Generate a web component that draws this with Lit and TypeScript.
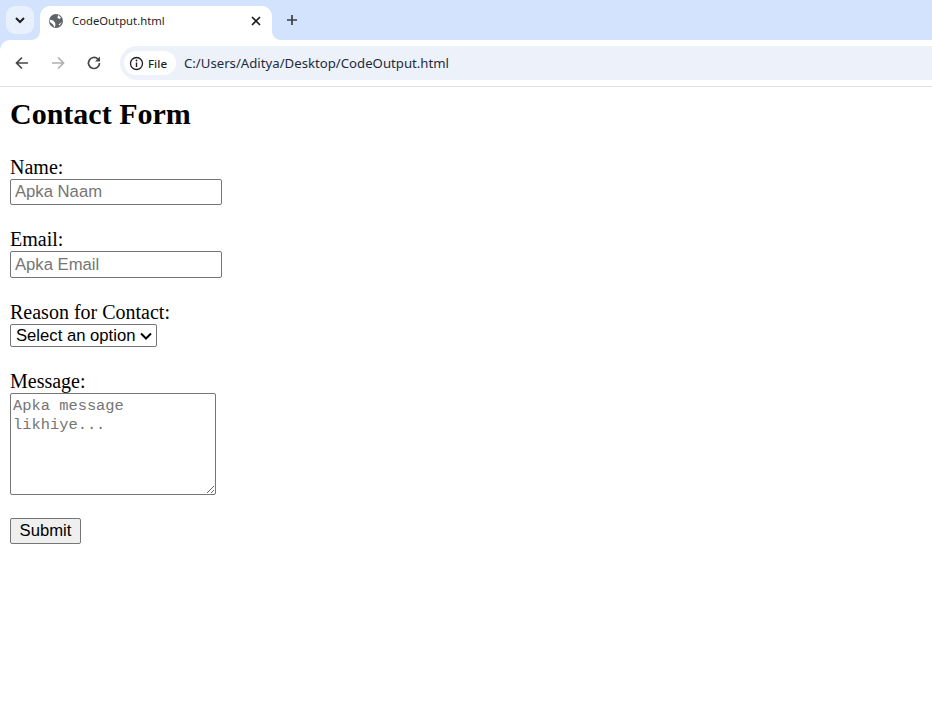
import { LitElement, html, css } from "lit";
import { customElement } from "lit/decorators.js";

@customElement("app-root")
export class AppRoot extends LitElement {
  static styles = css`
    :host { display: block; width: 932px; height: 723px; overflow: hidden; background: #fff; font-family: "Liberation Serif", serif; color: #000; }
    .chrome { background: #d3e3fd; font-family: "Noto Sans", "Open Sans", sans-serif; }
    .strip { height: 40px; display: flex; align-items: flex-start; box-sizing: border-box; padding: 6px 0 0 6px; }
    .tabsearch { width: 28px; height: 28px; border-radius: 9px; background: #e9f0fd; display: flex; align-items: center; justify-content: center; margin-right: 6px; }
    .tab { position: relative; width: 232px; height: 34px; background: #fff; border-radius: 10px 10px 0 0; display: flex; align-items: center; box-sizing: border-box; padding: 0 11px 5px 8px; }
    .tab::before, .tab::after { content: ""; position: absolute; bottom: 0; width: 8px; height: 8px; background: radial-gradient(circle at var(--c) 0, #d3e3fd 7.5px, #fff 8px); }
    .tab::before { left: -8px; --c: 0; }
    .tab::after { right: -8px; --c: 100%; }
    .favicon { margin-right: 8px; flex: none; }
    .title { flex: 1; font-size: 11.3px; color: #1f1f1f; white-space: nowrap; }
    .newtab { margin: 6px 0 0 12px; width: 16px; height: 16px; display: flex; }
    .toolbar { height: 46px; background: #fff; border-radius: 10px 0 0 0; display: flex; align-items: center; box-sizing: border-box; padding: 0 0 0 12px; }
    .nav { width: 20px; height: 20px; margin-right: 16px; display: flex; flex: none; }
    .omni { flex: 1; height: 34px; background: #edf2fa; border-radius: 17px 0 0 17px; display: flex; align-items: center; padding-left: 4px; }
    .chip { height: 24px; width: 52px; box-sizing: border-box; background: #fff; border-radius: 12px; display: flex; align-items: center; padding-left: 5px; gap: 4px; font-size: 11.6px; font-weight: 500; color: #1f1f1f; }
    .url { margin-left: 8px; font-size: 13.2px; color: #1f2a3a; white-space: nowrap; }
    .rule { height: 1px; background: #e0e0e0; }
    main { padding: 0 10px; }
    h1 { margin: 0; padding-top: 9px; height: 69px; box-sizing: border-box; font-size: 30px; line-height: 36px; font-weight: 700; }
    .field { margin-bottom: 23px; font-size: 20px; line-height: 23px; }
    label { display: block; }
    input, select, textarea, button { display: block; margin: 0; box-sizing: border-box; }
    input { width: 212px; height: 26px; font: 16.67px "Liberation Sans", Arial, sans-serif; padding: 1px 4px; border: 1px solid #767676; border-radius: 2px; }
    input.tall { height: 27px; }
    select { appearance: none; width: 147px; height: 23px; font: 16.67px "Liberation Sans", Arial, sans-serif; border: 1px solid #767676; border-radius: 2px; color: #000; padding: 0 0 0 5px; background: #fff url("data:image/svg+xml,%3Csvg xmlns='http://www.w3.org/2000/svg' width='12' height='8' viewBox='0 0 12 8'%3E%3Cpath d='M1 1.500l5 5 5-5' fill='none' stroke='%23000' stroke-width='2'/%3E%3C/svg%3E") no-repeat right 4px center; }
    textarea { width: 206px; height: 102px; font: 15.4px/19px "Liberation Mono", monospace; padding: 3px 2px; border: 1px solid #767676; border-radius: 2px; }
    input::placeholder, textarea::placeholder { color: #757575; opacity: 1; }
    button { width: 71px; height: 26px; font: 16.67px "Liberation Sans", Arial, sans-serif; padding: 0; background: #efefef; color: #000; border: 1px solid #767676; border-radius: 2px; }
  `;

  render() {
    return html`
      <div class="chrome">
        <div class="strip">
          <div class="tabsearch">
            <svg width="12" height="12" viewBox="0 0 12 12"><path d="M2 4l4 4 4-4" fill="none" stroke="#1f1f1f" stroke-width="2"/></svg>
          </div>
          <div class="tab">
            <svg class="favicon" width="16" height="16" viewBox="0 0 16 16">
              <circle cx="8" cy="8" r="7" fill="#5f6368"/>
              <path d="M1.500 6.500L5 7.500l2 2 .5 2.500-1 2.500L5 11.500 2 9zM10 2l3 2.500L11.500 6 9.500 5zM14 9l-2.500 3.500-1-1z" fill="#fff"/>
            </svg>
            <span class="title">CodeOutput.html</span>
            <svg width="10" height="10" viewBox="0 0 10 10"><path d="M1 1l8 8M9 1l-8 8" stroke="#1f1f1f" stroke-width="1.700"/></svg>
          </div>
          <svg class="newtab" viewBox="0 0 16 16"><path d="M8 3v10M3 8h10" stroke="#3c4043" stroke-width="1.700"/></svg>
        </div>
        <div class="toolbar">
          <svg class="nav" viewBox="0 0 20 20"><path d="M16 10H5M10 4.500L4.500 10l5.500 5.500" fill="none" stroke="#474747" stroke-width="1.700"/></svg>
          <svg class="nav" viewBox="0 0 20 20"><path d="M4 10h11M10 4.500l5.500 5.500-5.500 5.500" fill="none" stroke="#b0b0b0" stroke-width="1.700"/></svg>
          <svg class="nav" viewBox="0 0 20 20"><path d="M15.500 10a5.500 5.500 0 1 1-1.600-3.900L15.500 7.700" fill="none" stroke="#474747" stroke-width="1.700"/><path d="M16 3.500V8.500H11z" fill="#474747"/></svg>
          <div class="omni">
            <div class="chip">
              <svg width="15" height="15" viewBox="0 0 15 15"><circle cx="7.500" cy="7.500" r="6" fill="none" stroke="#1f1f1f" stroke-width="1.300"/><path d="M7.500 6.500v4.500" stroke="#1f1f1f" stroke-width="1.400"/><circle cx="7.500" cy="4.500" r="0.900" fill="#1f1f1f"/></svg>
              <span>File</span>
            </div>
            <span class="url">C:/Users/Aditya/Desktop/CodeOutput.html</span>
          </div>
        </div>
      </div>
      <div class="rule"></div>
      <main>
        <h1>Contact Form</h1>
        <form>
          <div class="field"><label for="n">Name:</label><input id="n" placeholder="Apka Naam" /></div>
          <div class="field"><label for="e">Email:</label><input id="e" class="tall" placeholder="Apka Email" /></div>
          <div class="field"><label for="r">Reason for Contact:</label>
            <select id="r"><option>Select an option</option></select></div>
          <div class="field"><label for="m">Message:</label><textarea id="m" placeholder="Apka message likhiye..."></textarea></div>
          <button type="button">Submit</button>
        </form>
      </main>
    `;
  }
}
